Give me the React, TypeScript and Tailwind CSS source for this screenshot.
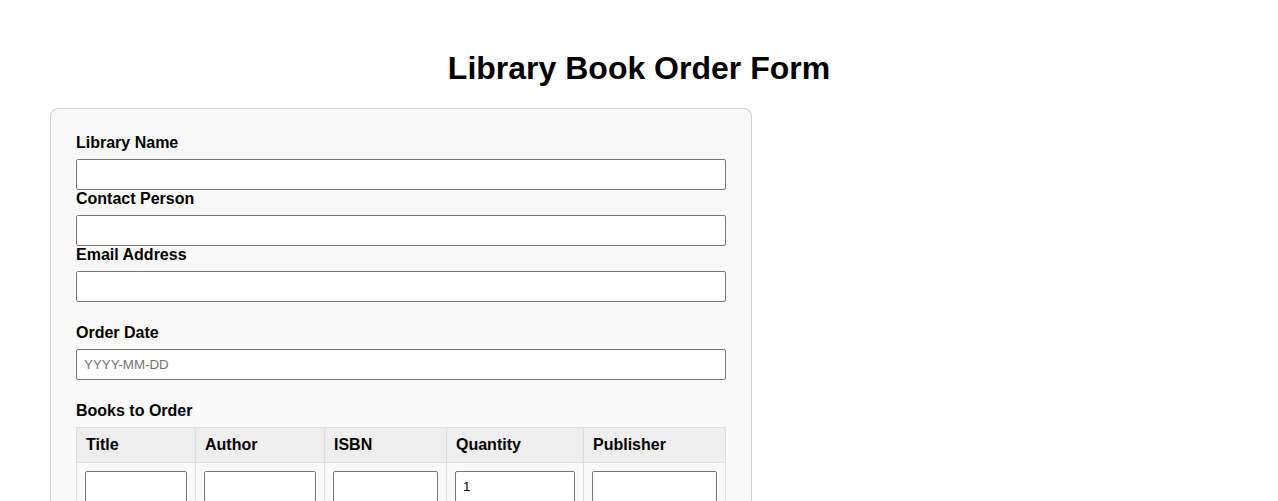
import React from "react";

const font = { fontFamily: '"Liberation Sans", Arial, sans-serif' };

const Field: React.FC<{ label: string; placeholder?: string }> = ({ label, placeholder }) => (
  <div>
    <label className="block font-bold text-[16px] leading-[18px] mb-[7px]">{label}</label>
    <input
      type="text"
      placeholder={placeholder}
      className="block w-full h-[31px] bg-white border border-[#767676] rounded-[2px] px-[7px] text-[13.33px] placeholder:text-[#757575] outline-none"
    />
  </div>
);

const columns = [
  { name: "Title", w: "w-[119px]" },
  { name: "Author", w: "w-[129px]" },
  { name: "ISBN", w: "w-[122px]" },
  { name: "Quantity", w: "w-[137px]" },
  { name: "Publisher", w: "w-[142px]" },
];

export default function App() {
  return (
    <div className="min-h-screen bg-white text-black pt-[50px]" style={font}>
      <h1 className="text-center font-bold text-[32px] leading-[37px] mb-[21px]">
        Library Book Order Form
      </h1>

      <form className="ml-[50px] w-[702px] bg-[#f9f9f9] border border-[#cccccc] rounded-[8px] p-[25px]">
        <Field label="Library Name" />
        <Field label="Contact Person" />
        <Field label="Email Address" />

        <div className="mt-[22px]">
          <Field label="Order Date" placeholder="YYYY-MM-DD" />
        </div>

        <div className="mt-[22px]">
          <label className="block font-bold text-[16px] leading-[18px] mb-[7px]">Books to Order</label>
          <table className="w-[650px] border-collapse table-fixed">
            <thead>
              <tr>
                {columns.map((c) => (
                  <th
                    key={c.name}
                    className={`${c.w} bg-[#eeeeee] border border-[#dddddd] px-[9px] py-[8px] text-left font-bold text-[16px] leading-[18px]`}
                  >
                    {c.name}
                  </th>
                ))}
              </tr>
            </thead>
            <tbody>
              <tr>
                {columns.map((c) => (
                  <td key={c.name} className="border border-[#dddddd] p-[8px] bg-[#f9f9f9]">
                    <input
                      type={c.name === "Quantity" ? "number" : "text"}
                      defaultValue={c.name === "Quantity" ? "1" : undefined}
                      className="block w-full h-[31px] bg-white border border-[#767676] rounded-[2px] px-[7px] text-[13.33px] outline-none"
                    />
                  </td>
                ))}
              </tr>
            </tbody>
          </table>
        </div>
      </form>
    </div>
  );
}
